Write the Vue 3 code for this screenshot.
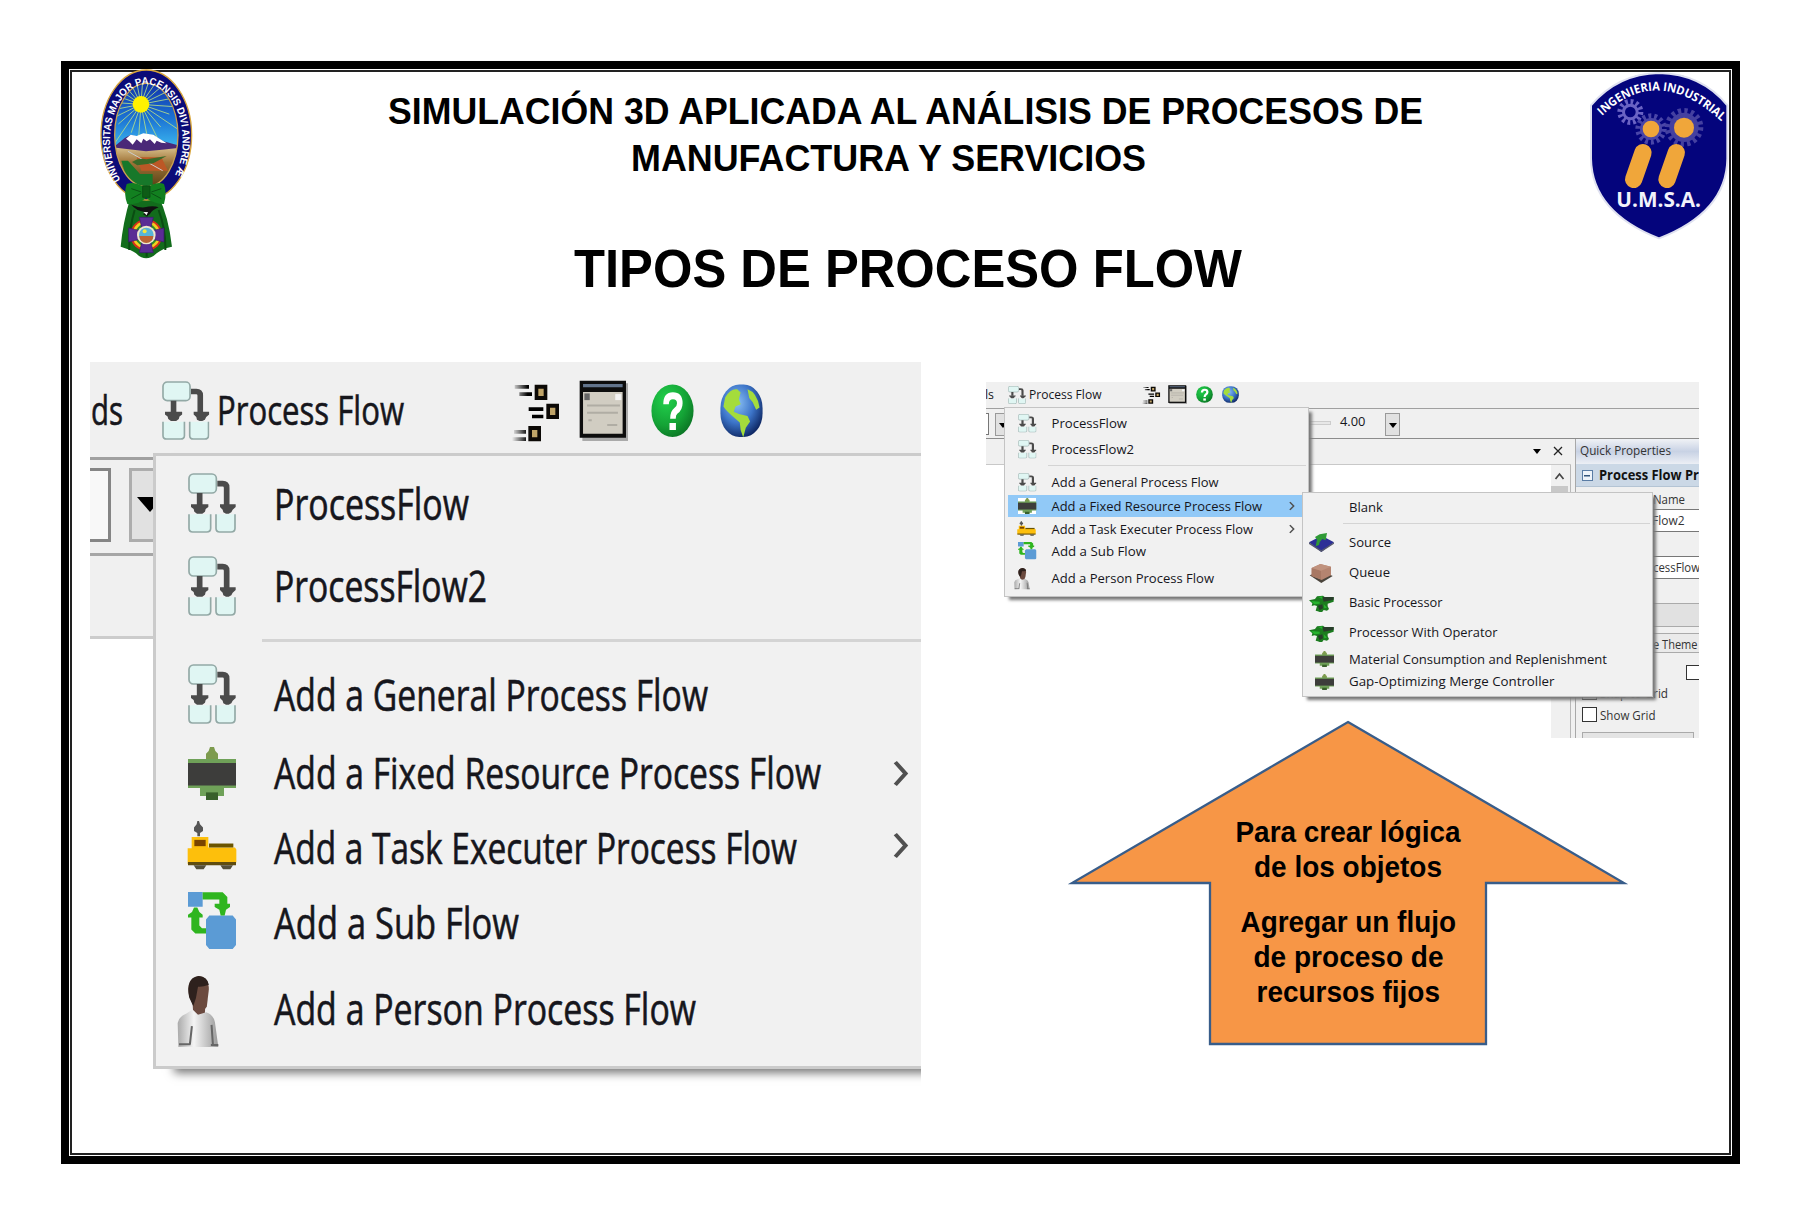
<script setup>
const titles = [
  { t: 'SIMULACIÓN 3D APLICADA AL ANÁLISIS DE PROCESOS DE', x: 9, w: 1035, y: 52, h: 60, size: 37.5 },
  { t: 'MANUFACTURA Y SERVICIOS', x: 252, w: 515, y: 39, h: 90, size: 37.5 },
  { t: 'TIPOS DE PROCESO FLOW', x: 195, w: 668, y: 65, h: 80, size: 53 }
]

const arrowLines = [
  { t: 'Para crear lógica', x: 168.5, w: 225, y: 122 },
  { t: 'de los objetos', x: 187, w: 188, y: 157 },
  { t: 'Agregar un flujo', x: 173.5, w: 215.5, y: 212 },
  { t: 'de proceso de', x: 186.5, w: 190, y: 247 },
  { t: 'recursos fijos', x: 189.5, w: 183.5, y: 282 }
]

const processMenu = (s) => s.map(([t, icon, w, h, dy, iw, ih, il, more, on]) => ({ t, icon, w, h, dy, iw, ih, il, more, on }))

const shots = [
  {
    id: 'large',
    tools: {
      texts: [{ t: 'ds', x: 1, w: 32, y: 63 }, { t: 'Process Flow', x: 127, w: 187, y: 63 }],
      icons: [
        { i: 'flow', ml: 70.5, mt: 19, w: 47.5, h: 59 },
        { i: 'conveyor', ml: 302.5, mt: 20, w: 48, h: 60 },
        { i: 'window', ml: 19, mt: 18, w: 49, h: 61 },
        { i: 'help', ml: 23, mt: 22, w: 43, h: 53.5 },
        { i: 'globe', ml: 26, mt: 22, w: 43, h: 53.5 }
      ]
    },
    menus: [
      {
        id: 'first', tx: 1, ty: 1.5,
        rows: processMenu([
          ['ProcessFlow', 'flow', 195, 82, 15, 48, 60, 33],
          ['ProcessFlow2', 'flow', 213, 83, 15.2, 48, 60, 33],
          [null, null, 0, 27],
          ['Add a General Process Flow', 'flow', 434, 80, 15, 48, 60, 33],
          ['Add a Fixed Resource Process Flow', 'fixed', 547, 78, 14.3, 48, 53, 33, true],
          ['Add a Task Executer Process Flow', 'task', 523, 67, 17, 50, 49, 32, true],
          ['Add a Sub Flow', 'sub', 245, 83, 17, 48, 57, 33],
          ['Add a Person Process Flow', 'person', 422, 98, 12.3, 42, 71, 22]
        ])
      }
    ]
  },
  {
    id: 'small',
    tools: {
      texts: [{ t: 'ls', x: -1, w: 9, y: 17 }, { t: 'Process Flow', x: 43, w: 72.5, y: 17 }],
      icons: [
        { i: 'flow', ml: 20.5, mt: 4, w: 18, h: 18 },
        { i: 'conveyor', ml: 116.5, mt: 4, w: 18.5, h: 18 },
        { i: 'window', ml: 7, mt: 3, w: 19, h: 19 },
        { i: 'help', ml: 9, mt: 4, w: 17, h: 17 },
        { i: 'globe', ml: 9, mt: 4, w: 17, h: 17 }
      ]
    },
    menus: [
      {
        id: 'first', tx: 0.5, ty: 0,
        rows: processMenu([
          ['ProcessFlow', 'flow', 75.5, 26.5, 4.4, 18.5, 18.5, 10],
          ['ProcessFlow2', 'flow', 82.5, 25, 4, 18.5, 18.5, 10],
          [null, null, 0, 7.5],
          ['Add a General Process Flow', 'flow', 167, 26, 4.7, 18.5, 18.5, 10],
          ['Add a Fixed Resource Process Flow', 'fixed', 210.5, 22, 4.7, 18.5, 16, 10, true, true],
          ['Add a Task Executer Process Flow', 'task', 201.5, 23, 5.2, 19, 15, 9.5, true],
          ['Add a Sub Flow', 'sub', 94.5, 22, 5.4, 18.5, 17.5, 10],
          ['Add a Person Process Flow', 'person', 162.5, 34, 4, 16, 21.5, 6]
        ])
      },
      {
        id: 'second', tx: 0, ty: 0,
        rows: processMenu([
          ['Blank', null, 34, 28, 4.7],
          [null, null, 0, 5],
          ['Source', 'source', 42, 33, 4.4, 25, 19, 6],
          ['Queue', 'queue', 41, 29, 3.5, 25, 19, 6],
          ['Basic Processor', 'machine', 93.5, 30.5, 3.6, 25, 17, 6],
          ['Processor With Operator', 'machine', 148.5, 29.5, 3.5, 25, 17, 6],
          ['Material Consumption and Replenishment', 'fixed', 258, 22, 4.7, 19, 16, 12],
          ['Gap-Optimizing Merge Controller', 'fixed', 205.5, 24, 4.4, 19, 16, 12]
        ])
      }
    ]
  }
]

const rays = Array.from({ length: 24 }, (_, i) => {
  const a = ((i * 15 + 4) * Math.PI) / 180
  const len = i % 2 ? 90 : 150
  return { x: 123 + Math.cos(a) * len, y: 103 + Math.sin(a) * len }
})
const gears = [
  { x: 127, y: 120, r: 25, c: '#6a63c4', hole: 16, n: 12 },
  { x: 189, y: 171, r: 33, c: '#4a46a8', hole: 0, n: 14 },
  { x: 288, y: 166, r: 44, c: '#4440a0', hole: 0, n: 16 }
]
</script>

<template>
  <svg class="defs" width="0" height="0" aria-hidden="true">
    <defs>
      <radialGradient id="gHelp" cx=".35" cy=".3" r=".8">
        <stop offset="0" stop-color="#22d04c" /><stop offset=".6" stop-color="#14a336" /><stop offset="1" stop-color="#0a6e22" />
      </radialGradient>
      <radialGradient id="gGlobe" cx=".4" cy=".35" r=".7">
        <stop offset="0" stop-color="#8ac0f4" /><stop offset=".55" stop-color="#3c74c8" /><stop offset="1" stop-color="#0c2460" />
      </radialGradient>
      <linearGradient id="gSky" x1="0" y1="0" x2="0" y2="1">
        <stop offset="0" stop-color="#1030a8" /><stop offset=".35" stop-color="#1c74d4" /><stop offset=".62" stop-color="#3cb8f0" />
      </linearGradient>
      <linearGradient id="gLand" x1="0" y1="0" x2="0" y2="1">
        <stop offset="0" stop-color="#d8c08c" /><stop offset=".35" stop-color="#a07438" /><stop offset="1" stop-color="#4c3810" />
      </linearGradient>
      <linearGradient id="gShirt"><stop offset="0" stop-color="#aaa" /><stop offset=".4" stop-color="#f4f4f4" /><stop offset="1" stop-color="#999" /></linearGradient>
      <linearGradient id="gDash"><stop offset="0" stop-color="#000" stop-opacity="0" /><stop offset=".5" stop-color="#000" /></linearGradient>
      <clipPath id="cSky"><ellipse cx="139" cy="195" rx="95" ry="155" /></clipPath>
    </defs>
    <symbol id="i-flow" viewBox="0 0 144 180" preserveAspectRatio="none">
      <g fill="#e0f6f3" stroke="#93a9a6" stroke-width="5">
        <rect x="3" y="3" width="82" height="57" rx="13" />
        <path d="M3 124v42q0 11 11 11h42q12 0 12-11v-42M84 124v42q0 11 11 11h34q12 0 12-11v-42" />
      </g>
      <path d="M35 60v38M88 32h16q12 0 12 12v54" fill="none" stroke="#4b4b4b" stroke-width="17" />
      <path d="M9 94h52v8l-8 6-2 8-8 6H27l-8-6-2-8-8-6zM96 94h47v8l-9 8-4 8-8 4h-8l-8-4-2-8-8-8z" fill="#4b4b4b" />
    </symbol>
    <symbol id="i-fixed" viewBox="0 0 144 160" preserveAspectRatio="none">
      <path d="M66 0h12l4 12 8 8v20H54V20l8-8z" fill="#7d9b4e" />
      <path d="M0 36h144v88h-36v24H36v-24H0z" fill="#6fa158" />
      <path d="M0 48h144v68H0z" fill="#3d3d3b" />
      <path d="M54 137h36v23H54z" fill="#38602a" />
    </symbol>
    <symbol id="i-task" viewBox="0 0 150 148" preserveAspectRatio="none">
      <path d="M31 0h5l3 10 9 10v10l-9 6v10h-8V36l-10-6V20l8-10z" fill="#555" />
      <path d="M14 48h50v32h80l4 6v38q0 6-6 6H2V82h12z" fill="#fdbf0c" />
      <path d="M22 57h34v19H22z" fill="#7a4400" /><path d="M66 68h73v12H66z" fill="#6b5400" />
      <path d="M3 124h144v10H3z" fill="#5f4c10" /><path d="M20 134h38l-8 12H28zM100 134h38l-8 12h-22z" fill="#55503c" />
    </symbol>
    <symbol id="i-sub" viewBox="0 0 144 170" preserveAspectRatio="none">
      <path d="M0 0h44v44H0zM64 70h70l10 12v76l-10 12H64l-10-12V82z" fill="#5b9bd5" />
      <path d="M44 1h60l14 14v20h8v10l-12 8-4 17h-12l-4-17-14-8V35h14V22H44zM18 46h10l6 14 10 8v8H34v24l8 8h12v16H22L10 112V76H0v-8l12-8z" fill="#2fb51f" />
    </symbol>
    <symbol id="i-person" viewBox="0 0 124 212" preserveAspectRatio="none">
      <path d="M46 78h38l-2 40H48z" fill="#6b4a40" />
      <path d="M4 212 2 140q4-20 26-28l18-12 16 16 24-8q22 8 26 30l10 74z" fill="url(#gShirt)" />
      <path d="M36 60Q26 8 64 0q30 4 30 40l-6 52-10 12-26-8z" fill="#6b4a3e" />
      <path d="M36 64Q24 6 64 0q26 2 30 26-20 8-32 6l-6 34-8 24z" fill="#2e211d" />
      <path d="M6 204h34M100 206h22M44 150l-6 54M102 146l4 58" stroke="#666" stroke-width="6" />
    </symbol>
    <symbol id="i-conveyor" viewBox="0 0 144 180" preserveAspectRatio="none">
      <path d="M68 8h38v46H68zM103 65h38v46h-38zM49 132h38v46H49z" fill="#0c0906" />
      <path d="M79 20h16v22H79zM114 77h16v22h-16zM60 144h16v22H60z" fill="#c0a468" />
      <path d="M8 9h43v11H8zM22 31h38v11H22zM50 76h44v11H50zM60 98h34v11H60zM6 144h36v11H6zM0 166h42v11H0z" fill="url(#gDash)" />
    </symbol>
    <symbol id="i-window" viewBox="0 0 146 182" preserveAspectRatio="none">
      <path d="M10 10h136v172H10z" fill="#aaa" /><path d="M2 2h138v170H2z" fill="#0d0d0d" />
      <path d="M12 12h118v10H12z" fill="#62748c" /><path d="M12 36h118v124H12z" fill="#d1cdc2" />
      <path d="M16 40h16v20H16z" fill="#666" /><path d="M108 42h18v18h-18z" fill="#f3f3f3" />
      <path d="M24 76h98M24 98h92M84 134h30M28 120h10" stroke="#b0ada4" stroke-width="6" />
    </symbol>
    <symbol id="i-help" viewBox="0 0 100 100" preserveAspectRatio="none">
      <circle cx="50" cy="50" r="49" fill="url(#gHelp)" />
      <path d="M35 38q0-16 16-16t16 14q0 9-9 14-7 4-7 15" fill="none" stroke="#fff" stroke-width="13" /><path d="M43 73h15v13H43z" fill="#fff" />
    </symbol>
    <symbol id="i-globe" viewBox="0 0 100 100" preserveAspectRatio="none">
      <rect x="1" y="1" width="98" height="98" rx="44" fill="url(#gGlobe)" />
      <path d="M12 25Q25 8 40 10l8 6-4 12 4 10-12 4-4 10 12 4 20 4 6 10-10 12-6 18-6-14-2-14-14-10Q14 50 8 42zM64 10q22 6 28 34l-8 4-8-14-8-8z" fill="#a4dc3c" />
    </symbol>
    <symbol id="i-source" viewBox="0 0 75 57" preserveAspectRatio="none">
      <path d="M0 28 38 8l37 20-38 29z" fill="#2c2f96" /><path d="M0 28l37 24 38-24v4L37 57 0 33z" fill="#54586c" />
      <path d="M18 12 32 4l22-4-4 22-10-4q-8 6-10 18l-10 4 4-20z" fill="#2f9a36" />
    </symbol>
    <symbol id="i-queue" viewBox="0 0 75 57" preserveAspectRatio="none">
      <path d="M2 34 38 20l33 16-34 21z" fill="#4a443c" /><path d="M8 12 34 0l32 8v26L38 48 8 36z" fill="#b58470" />
      <path d="M8 12l28 8v26L8 36z" fill="#a87864" /><path d="M8 12 34 0l32 8-30 12z" fill="#c0927e" />
    </symbol>
    <symbol id="i-machine" viewBox="0 0 75 51" preserveAspectRatio="none">
      <path d="M0 16 18 12l6-8 18-2 8 6 24-2v14l-18 6v8l4 8-6 5-10-2-6 8-12-4-6-2 4-14-8-2-8 2 2-8z" fill="#1c7c20" />
      <path d="M40 6h34v8l-30 6zM26 32l14-4 2 12-10 6z" fill="#283c2a" /><path d="M6 18l26 2v6l-16 2zM28 6l12-2v8zM44 28l10 10-8 2z" fill="#28b430" />
    </symbol>
  </svg>

  <main class="page">
    <div class="frame">
      <div class="slide">
        <header class="head">
          <svg class="crest" viewBox="0 0 280 570">
            <path d="M92 380q-24 80-30 150 34 10 46 20 30 30 62 0 20-16 46-20-10-90-40-150z" fill="#126c1c" />
            <path d="M104 420q-18 60-16 120M176 420q22 60 20 120M140 420v140" stroke="#0a4c12" stroke-width="6" fill="none" />
            <ellipse cx="139" cy="195" rx="136" ry="195" fill="#0b0b78" stroke="#d9a63c" stroke-width="4" />
            <g clip-path="url(#cSky)">
              <rect x="40" y="35" width="200" height="320" fill="url(#gSky)" />
              <line v-for="(r, i) in rays" :key="i" x1="123" y1="103" :x2="r.x" :y2="r.y" stroke="#b8e088" stroke-width="2.500" />
              <circle cx="123" cy="103" r="25" fill="#fff200" />
              <rect x="40" y="232" width="200" height="130" fill="url(#gLand)" />
              <path d="M40 232 74 204 92 194 110 200 130 192 160 196 190 214 236 226v8q-50 6-98 10z" fill="#4a2878" />
              <path d="M78 206 92 194 110 198 130 190 160 194 200 220l-16-2-14-6-6 10-14-14-10 6-10-8-6 14-14-12-12 16-10-10z" fill="#fff" />
              <path d="M110 262h74l20 40h-80z" fill="#bc5826" /><path d="M84 244l104 58" stroke="#ccc" stroke-width="3" />
              <path d="M96 276q20-14 44-8l60-10-40 22-48 6z" fill="#3a6a28" />
              <path d="M64 272h20l36 40h38v50H92z" fill="#17782a" />
            </g>
            <ellipse cx="139" cy="195" rx="95" ry="155" fill="none" stroke="#c8a050" stroke-width="4" />
            <path id="crestArc" d="M62 330A109 168 0 1 1 216 330" fill="none" />
            <text class="crest-text"><textPath href="#crestArc" textLength="672" lengthAdjust="spacingAndGlyphs">UNIVERSITAS MAJOR PACENSIS DIVI ANDRE Æ</textPath></text>
            <path d="M80 342q30-10 58 16 28-26 54-16 10 26 0 60-28 0-54-18-26 22-56 18-12-30-2-60z" fill="#128020" />
            <path d="M128 348h22v34h-22zM94 356l30 10M94 386l30-16M184 356l-30 10M184 386l-30-16" fill="#0d5c16" stroke="#0a5014" stroke-width="3" />
            <path d="M94 404q24 10 40 8 26-6 42 0-20 8-26 20l-8 6-12-4 4-8q-26-4-40-22z" fill="#111" /><path d="M130 426h14l-4 10z" fill="#eee" />
            <circle cx="139" cy="495" r="48" fill="#d83018" /><circle cx="139" cy="495" r="42" fill="#f0d020" /><circle cx="139" cy="495" r="34" fill="#2c8c2c" />
            <path d="M118 442h42l-8 34h-26zM118 548h42l-8-34h-26zM86 474v42l34-8v-26zM192 474v42l-34-8v-26z" fill="#5a2c94" stroke="#3a1870" stroke-width="2" />
            <circle cx="139" cy="495" r="28" fill="#efe6cc" /><circle cx="139" cy="495" r="22" fill="#58b4d8" /><path d="M118 498h42a21 21 0 0 1-42 0z" fill="#bc6434" /><circle cx="134" cy="484" r="6" fill="#f4e43c" />
          </svg>
          <h1 class="titles">
            <svg v-for="l in titles" :key="l.t" class="title" :style="{ height: l.h + 'px' }">
              <text :x="l.x" :y="l.y" :font-size="l.size" :textLength="l.w" lengthAdjust="spacingAndGlyphs">{{ l.t }}</text>
            </svg>
          </h1>
          <svg class="shield" viewBox="0 0 426 510">
            <path d="M9 100Q90 5 213 3 340 5 418 100V260Q416 420 213 499 12 420 9 260z" fill="#04047c" stroke="#dfe1f0" stroke-width="6" />
            <path id="shieldArc" d="M42 132Q206-28 398 146" fill="none" />
            <text class="shield-arc"><textPath href="#shieldArc" textLength="406" lengthAdjust="spacingAndGlyphs">INGENIERIA INDUSTRIAL</textPath></text>
            <g v-for="g in gears" :key="g.x" :transform="`translate(${g.x} ${g.y})`">
              <circle :r="g.r + 6" fill="none" :stroke="g.c" stroke-width="16" pathLength="100" :stroke-dasharray="`${50 / g.n} ${50 / g.n}`" />
              <circle :r="g.r" :fill="g.c" /><circle :r="g.hole" fill="#04047c" />
            </g>
            <circle cx="189" cy="171" r="25" fill="#f0a63a" /><circle cx="288" cy="167" r="30" fill="#f0a63a" />
            <path d="M165 242 137 322M265 242l-28 80" stroke="#f0a63a" stroke-width="52" stroke-linecap="round" />
            <text class="shield-name" x="85" y="404" textLength="254" lengthAdjust="spacingAndGlyphs">U.M.S.A.</text>
          </svg>
        </header>

        <div class="body">
          <section v-for="s in shots" :key="s.id" class="column" :class="'col-' + s.id">
            <div class="shot" :class="s.id">
              <div class="toolbar">
                <svg class="tool-text"><text v-for="t in s.tools.texts" :key="t.t" :x="t.x" :y="t.y" :textLength="t.w" lengthAdjust="spacingAndGlyphs">{{ t.t }}</text></svg>
                <svg v-for="b in s.tools.icons" :key="b.i" class="tool" :style="{ width: b.w + 'px', height: b.h + 'px', marginLeft: b.ml + 'px', marginTop: b.mt + 'px' }"><use :href="'#i-' + b.i" width="100%" height="100%" /></svg>
              </div>
              <div class="runbar">
                <i class="box" />
                <i class="drop"><svg viewBox="0 0 26 15" preserveAspectRatio="none"><path d="M0 0h26L13 15z" /></svg></i>
                <template v-if="s.id === 'small'">
                  <i class="slider" />
                  <svg class="speed"><text x="0" y="17" textLength="25.500" lengthAdjust="spacingAndGlyphs">4.00</text></svg>
                  <i class="drop speed-drop"><svg viewBox="0 0 26 15" preserveAspectRatio="none"><path d="M0 0h26L13 15z" /></svg></i>
                </template>
              </div>
              <div class="workspace">
                <div class="canvas">
                  <div class="tabs">
                    <svg v-if="s.id === 'small'" width="34" height="12"><path d="M0 4h8l-4 5z" /><path d="M21 2l8 8M29 2l-8 8" stroke="#222" stroke-width="1.3" /></svg>
                  </div>
                  <div class="view">
                    <div v-if="s.id === 'small'" class="scroll"><svg width="17" height="21"><path d="M4.500 14l4-5 4 5" fill="none" stroke="#444" stroke-width="1.7" /></svg><i /></div>
                  </div>
                </div>
                <aside v-if="s.id === 'small'" class="props">
                  <div class="p-head"><svg><text x="4" y="15.500" textLength="91" lengthAdjust="spacingAndGlyphs">Quick Properties</text></svg></div>
                  <div class="p-group">
                    <i class="minus" />
                    <svg><text class="bold" x="0" y="16" textLength="100" lengthAdjust="spacingAndGlyphs">Process Flow Pr</text></svg>
                  </div>
                  <div class="p-label"><svg><text x="77" y="17" textLength="32" lengthAdjust="spacingAndGlyphs">Name</text></svg></div>
                  <div class="p-field"><svg><text x="76" y="15" textLength="32.500" lengthAdjust="spacingAndGlyphs">Flow2</text></svg></div>
                  <div class="p-space" />
                  <div class="p-field"><svg><text x="77" y="14.500" textLength="47" lengthAdjust="spacingAndGlyphs">cessFlow</text></svg></div>
                  <div class="p-space" />
                  <div class="p-button" />
                  <div class="p-theme"><svg><text x="77" y="15" textLength="44.500" lengthAdjust="spacingAndGlyphs">e Theme</text></svg></div>
                  <div class="p-checks"><i class="check" /></div>
                  <div class="p-check"><i class="check" /><svg><text x="3" y="12.500" textLength="68" lengthAdjust="spacingAndGlyphs">Snap to Grid</text></svg></div>
                  <div class="p-check"><i class="check" /><svg><text x="3" y="12.500" textLength="55.500" lengthAdjust="spacingAndGlyphs">Show Grid</text></svg></div>
                  <div class="p-bottom"><i /></div>
                </aside>
              </div>
              <div v-for="m in s.menus" :key="m.id" class="menu" :class="m.id">
                <div v-for="(r, i) in m.rows" :key="i" class="row" :class="{ sep: !r.t, on: r.on }" :style="{ height: r.h + 'px' }">
                  <template v-if="r.t">
                    <span class="slot">
                      <svg v-if="r.icon" :class="{ lit: r.on }" :style="{ width: r.iw + 'px', height: r.ih + 'px', marginLeft: r.il + 'px' }"><use :href="'#i-' + r.icon" width="100%" height="100%" /></svg>
                    </span>
                    <svg class="label"><text :x="m.tx" :y="r.h / 2 + r.dy + m.ty" :textLength="r.w" lengthAdjust="spacingAndGlyphs">{{ r.t }}</text></svg>
                    <svg v-if="r.more" class="more" viewBox="0 0 14 28" preserveAspectRatio="none"><path d="M2 3l9 11-9 11" /></svg>
                  </template>
                </div>
              </div>
            </div>
            <svg v-if="s.id === 'small'" class="arrow" viewBox="0 0 562 330">
              <path d="M281 2 557 163H419V324H143V163H5z" fill="#f79646" stroke="#385d8a" stroke-width="2.300" />
              <text v-for="l in arrowLines" :key="l.t" :x="l.x" :y="l.y" :textLength="l.w" lengthAdjust="spacingAndGlyphs">{{ l.t }}</text>
            </svg>
          </section>
        </div>
      </div>
    </div>
  </main>
</template>

<style>
body { background: #fff; }
</style>

<style scoped>
* { box-sizing: border-box; }
svg { display: block; flex: none; overflow: visible; }
.defs { position: absolute; }
.page { width: 1800px; height: 1223px; padding: 61px; background: #fff; overflow: hidden; }
.frame { width: 1679px; height: 1102.5px; border: 8px solid #000; padding: 1px; }
.slide { height: 100%; border: 2px solid #222; display: flex; flex-direction: column; }
.head { display: flex; height: 290px; flex: none; }
.crest { width: 93.3px; height: 190px; margin: -2px 186px 0 28px; }
.crest-text { font: bold 31px "Liberation Sans", sans-serif; fill: #fff; }
.titles { width: 1060px; margin: 0; font: bold 37px "Liberation Sans", Arial, sans-serif; display: flex; flex-direction: column; }
.title { width: 1060px; }
.shield { width: 142px; height: 170px; margin: 0 0 0 148.500px; }
.shield-arc { font: bold 36px "Open Sans", sans-serif; fill: #fff; }
.shield-name { font: bold 62px "Open Sans", sans-serif; fill: #f2f2fa; }

.body { display: flex; flex: 1; align-items: flex-start; }
.col-large { margin-left: 18px; width: 830.5px; }
.col-small { margin: 20px 0 0 65.500px; width: 713px; }
.shot { position: relative; background: #f0f0f0; overflow: hidden; display: flex; flex-direction: column; font-family: "Open Sans", "Noto Sans", sans-serif; }
.shot text { fill: #16161c; }
.toolbar { display: flex; align-items: flex-start; flex: none; }
.tool-text { width: 1px; height: 1px; }
.runbar { display: flex; flex: none; }
.workspace { display: flex; flex: 1; }
.canvas { display: flex; flex-direction: column; flex: 1; }
.view { flex: 1; background: #fff; display: flex; justify-content: flex-end; }
.menu { position: absolute; background: #f1f1f1; display: flex; flex-direction: column; }
.row { display: flex; flex: none; }
.slot { display: flex; align-items: center; flex: none; height: 100%; }
.label { flex: 1; height: 100%; min-width: 0; }
.more { align-self: center; }
.more path { fill: none; stroke: #505050; stroke-width: 3.600; }
.sep { align-items: center; }
.sep::after { content: ""; flex: 1; background: #d4d4d4; }
.lit { background: linear-gradient(#fff 0 3px, #e8f0f4 3px 13px, #fff 13px); }

.large { width: 830.5px; height: 728px; font-size: 44px; }
.large text { stroke: #16161c; stroke-width: .6; }
.large .toolbar { height: 94.500px; font-size: 41px; }
.large .runbar { height: 99px; border-top: 3px solid #a0a0a0; border-bottom: 3px solid #a6a6a6; padding-top: 8px; }
.large .box { width: 21px; height: 74px; border: 3px solid #858585; border-left: 0; background: #f8f8f8; }
.large .drop { width: 40px; height: 74px; margin-left: 18px; border: 3px solid #adadad; background: #e1e1e1; padding: 26px 0 0 5px; }
.large .drop svg { width: 26px; height: 15px; }
.large .tabs { height: 83px; border-bottom: 3px solid #ccc; }
.large .first { left: 63px; top: 90.500px; width: 790px; height: 616.500px; border: 3px solid #cbcbcb; padding-top: 6.500px; box-shadow: 18px 7px 9px -3px #777; }
.large .slot { width: 118px; margin-left: -1px; }
.large .sep { padding-left: 106px; }
.large .sep::after { height: 3px; }
.large .more { width: 16px; height: 29px; margin-right: 31px; }

.small { width: 712.500px; height: 356px; font-size: 13.500px; }
.small .toolbar { height: 26px; }
.small .runbar { height: 31px; border-top: 1px solid #a0a0a0; border-bottom: 1px solid #8c8c8c; padding-top: 3.500px; }
.small .box { width: 2.500px; height: 22px; border: 1px solid #777; border-left: 0; background: #fff; }
.small .drop { width: 15px; height: 23px; margin-left: 6.500px; border: 1px solid #999; background: #e1e1e1; padding: 9px 0 0 3px; }
.small .drop svg { width: 8px; height: 5px; }
.slider { width: 27px; height: 4px; margin: 8px 0 0 294px; border: 1px solid #ccc; background: #e7e7e7; }
.speed { width: 25px; height: 20px; margin-left: 9px; margin-top: -3.500px; }
.small .speed-drop { margin-left: 20px; }
.small .tabs { height: 25.500px; border-bottom: 1px solid #c8c8c8; display: flex; justify-content: flex-end; padding: 5.500px 4px 0 0; }
.scroll { width: 19.500px; background: #f0f0f0; border-right: 1px solid #b8b8b8; display: flex; flex-direction: column; }
.scroll i { width: 17px; height: 70px; background: #c8c8c8; }
.props { width: 123.500px; margin-left: 4.500px; border-left: 1px solid #a8a8a8; display: flex; flex-direction: column; }
.props > div { flex: none; }
.props svg { width: 100px; height: 20px; }
.props text { fill: #333; }
.props .bold { font-weight: bold; fill: #111; }
.p-head { height: 25px; background: linear-gradient(#f0f2f6, #c8d2e4 50%, #eceff5); }
.p-group { height: 23px; background: #cbd8e6; border-bottom: 1px solid #b4c4d4; display: flex; padding-left: 6px; }
.minus { width: 12px; height: 11px; margin: 6px 6px 0 0; border: 1px solid #5a7ca4; background: linear-gradient(#33557c, #33557c) center / 6px 1.500px no-repeat #eef3f9; }
.p-label { height: 22px; }
.p-field { height: 23px; background: #fff; border-top: 1px solid #777; border-bottom: 1px solid #777; }
.p-space { height: 24px; }
.p-button { height: 23.500px; background: #e1e1e1; border-top: 1px solid #aaa; border-bottom: 1px solid #aaa; margin-bottom: 6px; }
.p-theme { height: 20px; background: #eaeaea; border-top: 1px solid #aaa; border-bottom: 1px solid #aaa; }
.p-checks { height: 32px; display: flex; padding: 12px 0 0 109.500px; }
.check { width: 15px; height: 15px; border: 1px solid #333; background: #fff; flex: none; }
.p-check { height: 22.500px; display: flex; padding-left: 6px; }
.p-bottom { height: 10px; display: flex; padding-left: 5.500px; padding-top: 2px; }
.p-bottom i { width: 112px; height: 20px; border: 1px solid #aaa; background: #e4e4e4; }
.small .menu { border: 1px solid #c4c4c4; box-shadow: 4px 4px 3px -1px #777; }
.small .first { left: 17.500px; top: 25px; width: 305px; height: 189.500px; padding: 2px 2px 0 3px; }
.small .slot { width: 43px; }
.small .second { left: 316px; top: 109.500px; width: 351px; height: 205.500px; padding: .5px 2px 0 0; }
.small .second .slot { width: 45.500px; }
.small .sep { padding-left: 40px; }
.small .sep::after { height: 1px; }
.small .on { background: #91c9f7; }
.small .more { width: 6px; height: 10px; margin-right: 10.500px; }

.arrow { position: relative; width: 562px; height: 330px; margin: -18px 0 0 80.500px; }
.arrow text { font: bold 29px "Liberation Sans", Arial, sans-serif; fill: #000; }
</style>
